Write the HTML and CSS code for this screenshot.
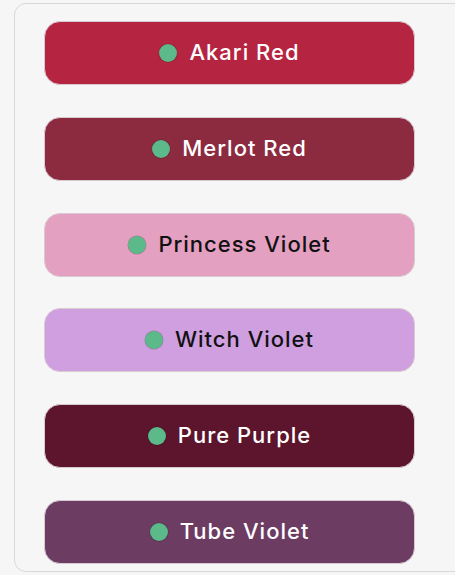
FILE: index.html
```html
<!DOCTYPE html>
<html lang="en">
<head>
<meta charset="UTF-8">
<meta name="viewport" content="width=device-width, initial-scale=1.0">
<title>Colour Swatches</title>
<link rel="stylesheet" href="styles.css">
</head>
<body>
    <div class="panel">
        <button class="swatch akari"><span class="dot"></span>Akari Red</button>
        <button class="swatch merlot"><span class="dot"></span>Merlot Red</button>
        <button class="swatch princess light"><span class="dot"></span>Princess Violet</button>
        <button class="swatch witch light"><span class="dot"></span>Witch Violet</button>
        <button class="swatch pure"><span class="dot"></span>Pure Purple</button>
        <button class="swatch tube"><span class="dot"></span>Tube Violet</button>
    </div>
</body>
</html>
```

FILE: styles.css
```css
body {
    font-family: Inter, "Open Sans", sans-serif;
    background-color: #f6f6f6;
    margin: 0;
    padding: 0;
    overflow: hidden;
}

.panel {
    width: 480px;
    margin: 3px 0 0 14px;
    padding: 17px 0 7px 29px;
    background-color: #f6f6f6;
    border: 1px solid #d8d8d8;
    border-radius: 12px;
    display: flex;
    flex-direction: column;
    gap: 31.8px;
}

.swatch {
    width: 371px;
    height: 64px;
    display: flex;
    align-items: center;
    justify-content: center;
    gap: 12px;
    font-family: inherit;
    font-size: 22px;
    font-weight: 500;
    letter-spacing: 1px;
    color: #fff;
    border: 1px solid #d9c9d0;
    border-radius: 16px;
    padding: 0 0 2px;
}

.swatch.light {
    color: #111;
}

.dot {
    width: 18px;
    height: 18px;
    margin-top: 2px;
    border-radius: 50%;
    background-color: #5cb98a;
    box-shadow: 0 0 0 0.5px rgba(0, 0, 0, 0.25);
}

.akari { background-color: #b52440; }
.merlot { background-color: #8c2b40; }
.princess { background-color: #e3a0c1; }
.witch { background-color: #cf9fe0; }
.pure { background-color: #5c152c; }
.tube { background-color: #6c3c63; }
```
